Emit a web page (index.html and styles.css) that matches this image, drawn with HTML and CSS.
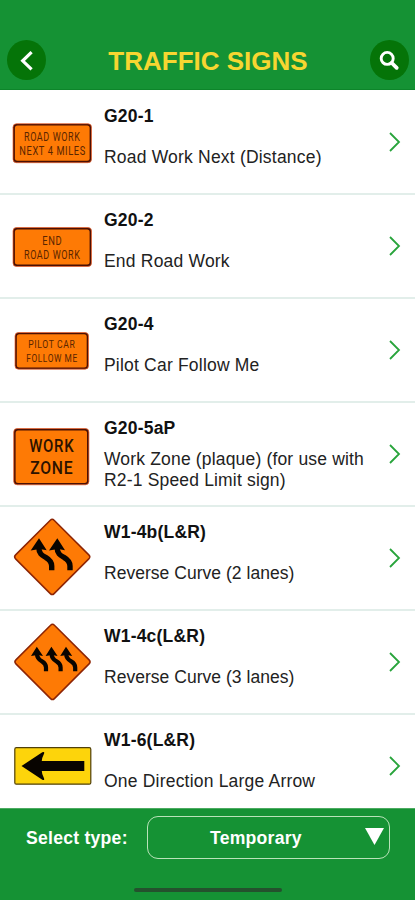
FILE: index.html
```html
<!DOCTYPE html>
<html lang="en">
<head>
<meta charset="utf-8">
<title>Traffic Signs</title>
<link rel="stylesheet" href="styles.css">
</head>
<body>
<div class="app">
  <header class="header">
    <button class="round" aria-label="Back"><svg viewBox="0 0 39 39"><path d="M24.600 11.200 15.700 19.800l8.900 8.600" fill="none" stroke="#fff" stroke-width="3.2"/></svg></button>
    <h1 class="heading">TRAFFIC SIGNS</h1>
    <button class="round" aria-label="Search"><svg viewBox="0 0 39 39"><circle cx="17.2" cy="17.4" r="6" fill="none" stroke="#fff" stroke-width="2.9"/><path d="M21.800 22l4.900 4.800" stroke="#fff" stroke-width="3.8" stroke-linecap="round"/></svg></button>
  </header>
  <main class="list">
    <article class="row">
      <svg class="sign" viewBox="0 0 104 104">
        <rect class="edge" x="13" y="33.7" width="78.5" height="39" rx="3.5"/><rect class="plate" x="14.9" y="35.6" width="74.7" height="35.2" rx="2.5"/>
        <text class="legend" x="24" y="50.5" textLength="56.5" lengthAdjust="spacingAndGlyphs">ROAD WORK</text>
        <text class="legend" x="19.3" y="65" textLength="66.5" lengthAdjust="spacingAndGlyphs">NEXT 4 MILES</text>
      </svg>
      <div class="info"><h2>G20-1</h2><p>Road Work Next (Distance)</p></div>
      <svg class="chevron" viewBox="0 0 12 20"><path d="M1 1l9 9-9 9"/></svg>
    </article>
    <article class="row">
      <svg class="sign" viewBox="0 0 104 104">
        <rect class="edge" x="13" y="33.5" width="78.5" height="39" rx="3.5"/><rect class="plate" x="14.9" y="35.4" width="74.7" height="35.2" rx="2.5"/>
        <text class="legend" x="42.3" y="50.5" textLength="20" lengthAdjust="spacingAndGlyphs">END</text>
        <text class="legend" x="24" y="65" textLength="56.5" lengthAdjust="spacingAndGlyphs">ROAD WORK</text>
      </svg>
      <div class="info"><h2>G20-2</h2><p>End Road Work</p></div>
      <svg class="chevron" viewBox="0 0 12 20"><path d="M1 1l9 9-9 9"/></svg>
    </article>
    <article class="row">
      <svg class="sign" viewBox="0 0 104 104">
        <rect class="edge" x="15" y="34.5" width="73.5" height="36.7" rx="3.5"/><rect class="plate" x="16.8" y="36.3" width="69.9" height="33.1" rx="2.5"/>
        <text class="legend small" x="28.3" y="50.3" textLength="47" lengthAdjust="spacingAndGlyphs">PILOT CAR</text>
        <text class="legend small" x="26.3" y="63.8" textLength="51.5" lengthAdjust="spacingAndGlyphs">FOLLOW ME</text>
      </svg>
      <div class="info"><h2>G20-4</h2><p>Pilot Car Follow Me</p></div>
      <svg class="chevron" viewBox="0 0 12 20"><path d="M1 1l9 9-9 9"/></svg>
    </article>
    <article class="row">
      <svg class="sign" viewBox="0 0 104 104">
        <rect class="edge" x="13.7" y="26.5" width="75.2" height="56.3" rx="3.5"/><rect class="plate" x="15.6" y="28.4" width="71.4" height="52.5" rx="2.5"/>
        <text class="legend big" x="29.3" y="49.8" textLength="45" lengthAdjust="spacingAndGlyphs">WORK</text>
        <text class="legend big" x="30.3" y="71.8" textLength="43" lengthAdjust="spacingAndGlyphs">ZONE</text>
      </svg>
      <div class="info"><h2>G20-5aP</h2><p class="wrapped">Work Zone (plaque) (for use with R2-1 Speed Limit sign)</p></div>
      <svg class="chevron" viewBox="0 0 12 20"><path d="M1 1l9 9-9 9"/></svg>
    </article>
    <article class="row">
      <svg class="sign" viewBox="0 0 104 104">
        <path class="diamond" d="M50.3 14.2q1.9-1.9 3.8 0L88.8 48.9q2 2 0 4L54.1 87.6q-1.9 1.9-3.8 0L15.6 52.900q-2-2 0-4z"/>
        <g id="curve-b"><path d="M38.900 42C38.900 48 42.500 49.500 46 51.600S51.700 56 51.700 60v4.200" fill="none" stroke="#080400" stroke-width="5.4"/><path d="M39 32.200 46.700 44.200l-7-1.200-9 1.400z" fill="#080400"/></g>
        <use href="#curve-b" x="18.3"/>
      </svg>
      <div class="info"><h2>W1-4b(L&amp;R)</h2><p class="tight">Reverse Curve (2 lanes)</p></div>
      <svg class="chevron" viewBox="0 0 12 20"><path d="M1 1l9 9-9 9"/></svg>
    </article>
    <article class="row">
      <svg class="sign" viewBox="0 0 104 104">
        <path class="diamond" d="M50.6 15.2q1.9-1.9 3.8 0L89.1 49.9q2 2 0 4L54.4 88.6q-1.9 1.9-3.8 0L15.9 53.9q-2-2 0-4z"/>
        <g id="curve-c"><path d="M37 44C37 48.500 39.500 50 42 51.400S46 54.500 46 57.500v3.800" fill="none" stroke="#080400" stroke-width="4.2"/><path d="M36.8 36.800 43 46l-5.500-1-6.500 1z" fill="#080400"/></g>
        <use href="#curve-c" x="14.6"/><use href="#curve-c" x="29.2"/>
      </svg>
      <div class="info"><h2>W1-4c(L&amp;R)</h2><p class="tight">Reverse Curve (3 lanes)</p></div>
      <svg class="chevron" viewBox="0 0 12 20"><path d="M1 1l9 9-9 9"/></svg>
    </article>
    <article class="row">
      <svg class="sign" viewBox="0 0 104 104">
        <rect x="14.8" y="33.7" width="76" height="36.5" rx="1.5" fill="#fdd40b" stroke="#514009" stroke-width="1.2"/>
        <path d="M21.5 52 42.3 38.3q3-1.3 1.4 2.3-2 4-1.9 6.4H84.3v10H41.8q0 2.700 1.900 6.600 1.500 3.400-1.400 2.200z" fill="#080400"/>
      </svg>
      <div class="info"><h2>W1-6(L&amp;R)</h2><p>One Direction Large Arrow</p></div>
      <svg class="chevron" viewBox="0 0 12 20"><path d="M1 1l9 9-9 9"/></svg>
    </article>
  </main>
  <footer class="footer">
    <div class="filter">
      <span class="label">Select type:</span>
      <div class="select"><span>Temporary</span><svg class="caret" viewBox="0 0 19 17"><path d="M0 0h19L9.500 17z" fill="#fff"/></svg></div>
    </div>
    <div class="home"></div>
  </footer>
</div>
</body>
</html>
```
FILE: styles.css
```css
* { box-sizing: border-box; margin: 0; }
body { font-family: "Liberation Sans", Arial, sans-serif; background: #fff; }
.app { width: 415px; height: 900px; display: flex; flex-direction: column; overflow: hidden; }
svg { display: block; flex: none; }

.header { height: 90px; flex: none; padding: 40px 6px 0 7px; display: flex; align-items: flex-start; justify-content: space-between; background: #159234; border-bottom: 1px solid #0d852a; }
.round { width: 39px; height: 40px; padding: 0; border: 0; border-radius: 50%; background: #057408; }
.round svg { width: 39px; height: 39px; }
.heading { color: #f7d631; font-size: 26px; line-height: 30px; margin-top: 6px; letter-spacing: 0; white-space: nowrap; }

.list { height: 718px; flex: none; overflow: hidden; padding-top: 1px; }
.row { height: 104px; display: flex; border-bottom: 2px solid #e2eeea; }
.row:last-child { border-bottom: 0; }
.sign { width: 104px; height: 104px; margin-top: -1px; }
.info { width: 272px; flex: none; padding-top: 15px; color: #111; }
.info h2 { font-size: 17.500px; line-height: 21px; letter-spacing: .2px; }
.info p { font-size: 17.500px; line-height: 21px; letter-spacing: .2px; margin-top: 20px; color: #222; }
.info .wrapped { margin-top: 10px; letter-spacing: .17px; }
.info .tight { letter-spacing: .03px; }
.chevron { width: 12px; height: 20px; margin: 41px 0 0 13px; fill: none; stroke: #28a43b; stroke-width: 1.8; }

.edge { fill: #4a1004; stroke: #f0622a; stroke-width: .7; }
.plate { fill: #fe7a05; }
.diamond { fill: #fe7a05; stroke: #8d2404; stroke-width: 1.5; }
.legend { font-family: "Roboto", sans-serif; font-size: 12px; fill: #5a2500; letter-spacing: .8px; }
.small { font-size: 11.500px; }
.big { font-size: 17.500px; font-weight: 500; fill: #2c1200; }

.footer { flex: 1; background: #159234; color: #fff; border-top: 1px solid #4cab61; font-size: 17.600px; font-weight: bold; letter-spacing: .25px; }
.filter { display: flex; align-items: center; padding: 7px 0 0 26px; }
.label { width: 121px; flex: none; white-space: nowrap; padding-top: 1px; }
.select { width: 243px; height: 43px; border: 1.500px solid #b9e3b9; border-radius: 11px; display: flex; align-items: center; padding: 0 5px 0 62px; justify-content: space-between; }
.select span { padding-top: 1px; }
.caret { width: 19px; height: 17px; margin-bottom: 3px; }
.home { width: 148px; height: 4px; border-radius: 2px; margin: 29px auto 0; background: #24512d; }
```
